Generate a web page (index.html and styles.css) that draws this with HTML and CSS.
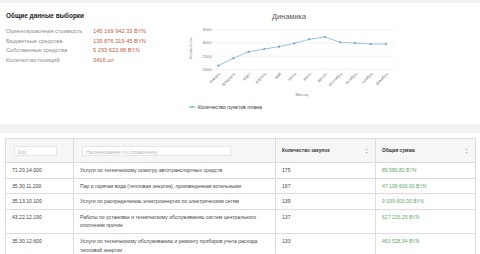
FILE: index.html
```html
<!DOCTYPE html>
<html lang="ru">
<head>
<meta charset="utf-8">
<link rel="stylesheet" href="styles.css">
</head>
<body>
<div class="page">
  <section class="card summary">
    <div class="stats">
      <h2 class="stats-title">Общие данные выборки</h2>
      <div class="stats-grid">
        <span class="lbl">Ориентировочная стоимость</span><span class="val">145 169 942.33 BYN</span>
        <span class="lbl">Бюджетные средства</span><span class="val">139 876 319.45 BYN</span>
        <span class="lbl">Собственные средства</span><span class="val">5 293 622.88 BYN</span>
        <span class="lbl">Количество позиций</span><span class="val">3416 шт</span>
      </div>
    </div>
    <svg class="chart" width="240" height="117" viewBox="170 3 240 117">
      <text class="c-title" x="289" y="18.8" text-anchor="middle">Динамика</text>
      <g class="grid">
        <line x1="213" y1="29.7" x2="395" y2="29.7"/>
        <line x1="213" y1="42.9" x2="395" y2="42.9"/>
        <line x1="213" y1="56.1" x2="395" y2="56.1"/>
        <line x1="213" y1="69.3" x2="395" y2="69.3"/>
      </g>
      <g class="ylab" text-anchor="end">
        <text x="211.5" y="31.2">3500</text>
        <text x="211.5" y="44.4">3000</text>
        <text x="211.5" y="57.6">2500</text>
        <text x="211.5" y="70.8">2000</text>
      </g>
      <text class="ytitle" transform="translate(191.5,48) rotate(-90)" text-anchor="middle">Количество</text>
      <polyline class="line" points="218.3,65.7 233.3,58.3 248.7,51.7 264.3,49 279,46.7 294.3,43.3 309.3,39.3 325,37 340,42.3 355,43 370.7,44 386,44"/>
      <g class="dots">
        <circle cx="218.3" cy="65.7" r="1.1"/><circle cx="233.3" cy="58.3" r="1.1"/><circle cx="248.7" cy="51.7" r="1.1"/><circle cx="264.3" cy="49" r="1.1"/><circle cx="279" cy="46.7" r="1.1"/><circle cx="294.3" cy="43.3" r="1.1"/><circle cx="309.3" cy="39.3" r="1.1"/><circle cx="325" cy="37" r="1.1"/><circle cx="340" cy="42.3" r="1.1"/><circle cx="355" cy="43" r="1.1"/><circle cx="370.7" cy="44" r="1.1"/><circle cx="386" cy="44" r="1.1"/>
      </g>
      <g class="xlab" text-anchor="end">
        <text transform="translate(220.5,74) rotate(-45)">январь</text>
        <text transform="translate(235.5,74) rotate(-45)">февраль</text>
        <text transform="translate(251,74) rotate(-45)">март</text>
        <text transform="translate(266.5,74) rotate(-45)">апрель</text>
        <text transform="translate(281.5,74) rotate(-45)">май</text>
        <text transform="translate(296.5,74) rotate(-45)">июнь</text>
        <text transform="translate(311.5,74) rotate(-45)">июль</text>
        <text transform="translate(327.5,74) rotate(-45)">август</text>
        <text transform="translate(342.5,74) rotate(-45)">сентябрь</text>
        <text transform="translate(357.5,74) rotate(-45)">октябрь</text>
        <text transform="translate(373,74) rotate(-45)">ноябрь</text>
        <text transform="translate(388.5,74) rotate(-45)">декабрь</text>
      </g>
      <text class="xtitle" x="302" y="96" text-anchor="middle">Месяц</text>
      <line class="line" x1="188" y1="107" x2="196" y2="107"/>
      <circle class="dot" cx="192" cy="107" r="1.1"/>
      <text class="legend" x="198" y="108.8">Количество пунктов плана</text>
    </svg>
  </section>

  <section class="card tablecard">
    <table class="data">
      <colgroup>
        <col class="c1"><col class="c2"><col class="c3"><col class="c4">
      </colgroup>
      <thead>
        <tr>
          <th><span class="inp inp-code">Код</span></th>
          <th><span class="inp inp-name">Наименование по справочнику</span></th>
          <th><div class="th-sort"><span>Количество закупок</span><svg class="sort" width="3" height="6" viewBox="0 0 3 6"><path d="M1.5 0.5 L2.6 2 L0.4 2 Z M1.5 5.5 L2.6 4 L0.4 4 Z"/></svg></div></th>
          <th><div class="th-sort"><span>Общая сумма</span><svg class="sort" width="3" height="6" viewBox="0 0 3 6"><path d="M1.5 0.5 L2.6 2 L0.4 2 Z M1.5 5.5 L2.6 4 L0.4 4 Z"/></svg></div></th>
        </tr>
      </thead>
      <tbody>
        <tr><td>71.20.14.000</td><td>Услуги по техническому осмотру автотранспортных средств</td><td>175</td><td class="sum">89 580.82 BYN</td></tr>
        <tr><td>35.30.11.200</td><td>Пар и горячая вода (тепловая энергия), произведенная котельными</td><td>167</td><td class="sum">47 109 600.00 BYN</td></tr>
        <tr><td>35.13.10.100</td><td>Услуги по распределению электроэнергии по электрическим сетям</td><td>139</td><td class="sum">9 039 603.00 BYN</td></tr>
        <tr><td>43.22.12.190</td><td>Работы по установке и техническому обслуживанию систем центрального отопления прочие</td><td>137</td><td class="sum">627 215.25 BYN</td></tr>
        <tr><td>35.30.12.600</td><td>Услуги по техническому обслуживанию и ремонту приборов учета расхода тепловой энергии</td><td>133</td><td class="sum">463 528.34 BYN</td></tr>
      </tbody>
    </table>
  </section>
</div>
</body>
</html>
```
FILE: styles.css
```css
html, body {
  margin: 0;
  padding: 0;
}
body {
  background: #f2f2f2;
  font-family: "Liberation Sans", Arial, sans-serif;
  color: #333;
  width: 480px;
  height: 254px;
  overflow: hidden;
}
.page {
  padding-top: 3px;
}
.card {
  background: #fff;
}
.summary {
  display: flex;
  height: 121px;
}
.stats {
  width: 164px;
  padding: 9px 0 0 6px;
}
.stats-title {
  margin: 0 0 7px;
  font-size: 6.4px;
  line-height: 8px;
  font-weight: bold;
  color: #222;
}
.stats-grid {
  display: grid;
  grid-template-columns: 87px auto;
  grid-auto-rows: 9.7px;
  font-size: 5.7px;
  line-height: 9.7px;
  white-space: nowrap;
}
.lbl {
  color: #8a8a8a;
}
.val {
  color: #c4603f;
}
.chart {
  display: block;
}
.chart text {
  font-family: "Liberation Sans", Arial, sans-serif;
}
.c-title {
  font-size: 7.4px;
  fill: #555;
}
.grid line {
  stroke: #e8e8e8;
  stroke-width: 0.6;
}
.ylab text {
  font-size: 4px;
  fill: #777;
}
.xlab text {
  font-size: 4.2px;
  fill: #777;
}
.ytitle {
  font-size: 4px;
  fill: #888;
}
.xtitle {
  font-size: 4.4px;
  fill: #888;
}
.line {
  fill: none;
  stroke: #8dbcd6;
  stroke-width: 0.9;
}
.dots circle, .dot {
  fill: #6fa3c2;
}
.legend {
  font-size: 5.2px;
  fill: #333;
}
.tablecard {
  margin-top: 9px;
  padding: 5px 5px 0;
  height: 121px;
  box-sizing: border-box;
  overflow: hidden;
}
.data {
  width: 470px;
  border-collapse: collapse;
  table-layout: fixed;
  border: 0.8px solid #dcdcdc;
  font-size: 5.1px;
  color: #444;
}
.c1 { width: 68px; }
.c2 { width: 202px; }
.c3 { width: 100px; }
.c4 { width: 100px; }
.data th {
  background: #f6f6f6;
  height: 23px;
  padding: 0 6px;
  text-align: left;
  font-weight: bold;
  font-size: 4.8px;
  color: #333;
  border-right: 0.8px solid #dcdcdc;
  border-bottom: 0.8px solid #dcdcdc;
}
.data td {
  padding: 3px 6px;
  line-height: 8.6px;
  vertical-align: top;
  border-right: 0.8px solid #dcdcdc;
  border-bottom: 0.8px solid #dcdcdc;
}
.data td.sum {
  color: #5fa66a;
}
.inp {
  display: block;
  height: 10px;
  line-height: 10px;
  padding: 0 3px;
  background: #fff;
  border: 0.6px solid #e6e6e6;
  color: #bbb;
  font-weight: normal;
  font-size: 5px;
  box-sizing: border-box;
}
.inp-code {
  width: 43px;
  margin-left: 2px;
}
.inp-name {
  width: 149px;
  margin-left: 2px;
}
.th-sort {
  display: flex;
  justify-content: space-between;
  align-items: center;
}
.sort {
  fill: #aaa;
  margin-right: 1px;
}
```
